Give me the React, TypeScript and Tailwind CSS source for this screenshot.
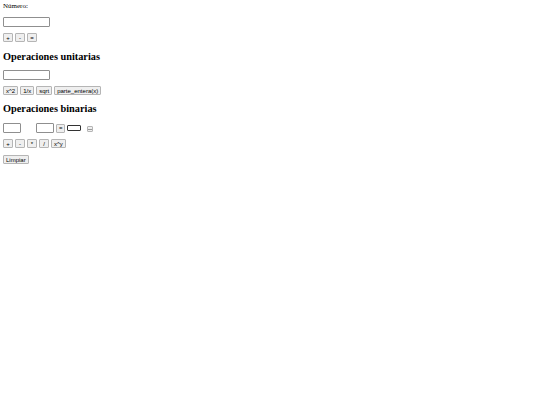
import React from "react";

const btn =
  "h-[9px] px-[2px] rounded-[1px] border border-[#b5b5b5] bg-[#efefef] text-[6px] leading-none text-black [font-family:'Liberation_Sans',Arial,sans-serif]";
const field = "h-[10px] rounded-[1px] border border-[#8f8f8f] bg-white";

function Row({ items }: { items: string[] }) {
  return (
    <div className="flex gap-[2px]">
      {items.map((t) => (
        <button key={t} className={`${btn} min-w-[10px]`}>
          {t}
        </button>
      ))}
    </div>
  );
}

export default function App() {
  return (
    <div className="min-h-[405px] w-[540px] bg-white px-[3px] pt-[2px] leading-none text-black [font-family:'Liberation_Serif','Times_New_Roman',serif]">
      <p className="text-[7px] leading-[9px]">Número:</p>
      <div className="mt-[6px] flex">
        <input className={`${field} w-[47px]`} />
      </div>
      <div className="mt-[6px] flex">
        <Row items={["+", "-", "="]} />
      </div>

      <h2 className="mt-[8px] text-[10.3px] font-bold leading-[13px]">Operaciones unitarias</h2>
      <div className="mt-[7px] flex">
        <input className={`${field} w-[47px]`} />
      </div>
      <div className="mt-[6px] flex">
        <Row items={["x^2", "1/x", "sqrt", "parte_entera(x)"]} />
      </div>

      <h2 className="mt-[7px] text-[10.3px] font-bold leading-[13px]">Operaciones binarias</h2>
      <div className="mt-[8px] flex items-center">
        <input className={`${field} w-[18px]`} />
        <input className={`${field} ml-[15px] w-[18px]`} />
        <button className={`${btn} ml-[2px] w-[9px]`}>=</button>
        <span className="ml-[2px] h-[6px] w-[14px] rounded-[1px] border border-[#333]" />
        <button className="ml-[6px] mt-[2px] flex h-[6px] w-[6px] items-center justify-center rounded-[1px] border border-[#b5b5b5] bg-[#efefef]">
          <span className="h-px w-[4px] bg-[#999]" />
        </button>
      </div>
      <div className="mt-[6px] flex">
        <Row items={["+", "-", "*", "/", "x^y"]} />
      </div>
      <div className="mt-[7px] flex">
        <button className={btn}>Limpiar</button>
      </div>
    </div>
  );
}
